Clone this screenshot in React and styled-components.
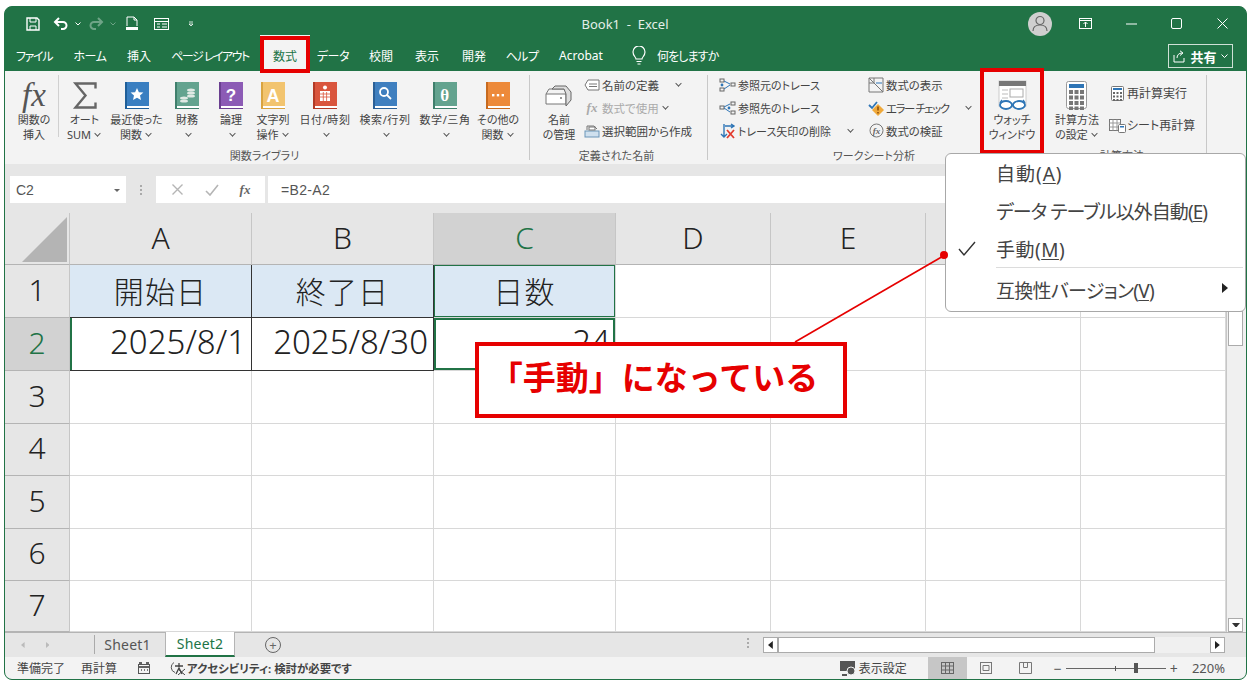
import React from "react";
import styled, { createGlobalStyle } from "styled-components";

const UI = `"Noto Sans", "Noto Sans CJK JP", sans-serif`;
const GREEN = "#217346";
const RED = "#e60000";

const Global = createGlobalStyle`
  html, body { margin: 0; padding: 0; background: #fff; }
  body { font-family: ${UI}; font-feature-settings: "palt"; }
  * { box-sizing: border-box; }
`;

const Page = styled.div`
  width: 1251px;
  height: 686px;
  padding: 6px 4px;
`;
const Window = styled.div`
  position: relative;
  width: 1243px;
  height: 674px;
  border: 1px solid ${GREEN};
  border-radius: 8px;
  overflow: hidden;
  display: flex;
  flex-direction: column;
  background: ${GREEN};
`;

/* ---------- title bar ---------- */
const TitleBar = styled.div`
  height: 33px;
  flex: none;
  display: flex;
  align-items: center;
  color: #fff;
`;
const Quick = styled.div`
  width: 420px;
  flex: none;
  display: flex;
  align-items: center;
  padding-left: 20px;
`;
const QuickSlot = styled.span`
  display: flex;
  align-items: center;
  justify-content: center;
  width: ${(p) => p.$w}px;
  height: 20px;
  margin-left: ${(p) => p.$ml ?? 0}px;
  opacity: ${(p) => (p.$dim ? 0.35 : 1)};
`;
const Title = styled.div`
  width: 400px;
  text-align: center;
  font-size: 13px;
  color: #e4efe9;
`;
const WinControls = styled.div`
  margin-left: auto;
  padding-right: 1px;
  display: flex;
  align-items: center;
`;
const Avatar = styled.span`
  width: 24px;
  height: 24px;
  border-radius: 50%;
  background: #cfcfcf;
  display: flex;
  align-items: center;
  justify-content: center;
  margin-right: 11px;
`;
const WinBtn = styled.span`
  width: 45.5px;
  display: flex;
  align-items: center;
  justify-content: center;
`;

/* ---------- tabs ---------- */
const TabBar = styled.div`
  height: 31px;
  flex: none;
  display: flex;
  align-items: stretch;
  position: relative;
  padding-left: 1px;
`;
const Tab = styled.div`
  width: ${(p) => p.$w}px;
  flex: none;
  display: flex;
  align-items: center;
  justify-content: center;
  font-size: 12px;
  letter-spacing: ${(p) => p.$ls ?? 0}px;
  white-space: nowrap;
  color: ${(p) => (p.$active ? GREEN : "#fff")};
  background: ${(p) => (p.$active ? "#f3f3f3" : "transparent")};
  margin-top: ${(p) => (p.$active ? "-5px" : 0)};
  padding-top: ${(p) => (p.$active ? "5px" : 0)};
`;
const Tell = styled.div`
  display: flex;
  align-items: center;
  gap: 11px;
  font-size: 12px;
  letter-spacing: -0.9px;
  color: #fff;
  margin-left: 14px;
`;
const Share = styled.div`
  position: absolute;
  left: 1163px;
  top: 4px;
  width: 65px;
  height: 24px;
  border: 1px solid #cfe0d6;
  display: flex;
  align-items: center;
  justify-content: center;
  gap: 4px;
  color: #fff;
  font-size: 13px;
  font-weight: 700;
`;

/* ---------- ribbon ---------- */
const Ribbon = styled.div`
  height: 93px;
  flex: none;
  background: #f3f3f3;
  display: flex;
  padding-left: 5px;
  color: #444;
`;
const Group = styled.div`
  width: ${(p) => p.$w}px;
  flex: none;
  display: flex;
  flex-direction: column;
  border-right: 1px solid #c8c8c8;
  margin: 4px 0;
  height: 85px;
`;
const GroupBody = styled.div`
  height: 74px;
  display: flex;
  flex: none;
`;
const LabelRow = styled.div`
  display: flex;
`;
const GroupLabel = styled.div`
  font-size: 11px;
  line-height: 14px;
  text-align: center;
  color: #555;
  white-space: nowrap;
  width: ${(p) => (p.$w ? `${p.$w}px` : "auto")};
  margin-left: ${(p) => p.$ml ?? 0}px;
  padding-right: ${(p) => p.$pr ?? 0}px;
`;
const BigBtn = styled.div`
  width: ${(p) => p.$w}px;
  flex: none;
  display: flex;
  flex-direction: column;
  align-items: center;
  padding-top: 4px;
  font-size: 11px;
  line-height: 15px;
  letter-spacing: ${(p) => p.$ls ?? 0}px;
  white-space: nowrap;
  text-align: center;
  border-right: ${(p) => (p.$line ? "1px solid #d0d0d0" : "none")};
  height: ${(p) => (p.$line ? "62px" : "auto")};
`;
const BigIcon = styled.div`
  height: 33px;
  flex: none;
  display: flex;
  align-items: center;
  justify-content: center;
`;
const Chev = styled.span`
  display: inline-block;
  width: 5px;
  height: 5px;
  border-right: 1px solid #555;
  border-bottom: 1px solid #555;
  transform: rotate(45deg) scale(0.9);
  margin: 0 2px 3px ${(p) => p.$gap ?? 4}px;
`;
const SmallCol = styled.div`
  width: ${(p) => p.$w}px;
  flex: none;
  display: flex;
  flex-direction: column;
  justify-content: ${(p) => (p.$spread ? "center" : "flex-start")};
  gap: ${(p) => (p.$spread ? "9px" : "0")};
  height: ${(p) => (p.$spread ? "66px" : "auto")};
  font-size: ${(p) => p.$fs ?? 11}px;
  margin-left: ${(p) => p.$ml ?? 0}px;
  margin-top: ${(p) => p.$mt ?? -2}px;
  padding-left: ${(p) => p.$pl ?? 0}px;
`;
const SmallRow = styled.div`
  height: 23px;
  display: flex;
  align-items: center;
  white-space: nowrap;
  letter-spacing: ${(p) => p.$ls ?? 0}px;
  color: ${(p) => (p.$dim ? "#aaa" : "#444")};
`;
const SmallIcon = styled.span`
  width: ${(p) => p.$w ?? 20}px;
  flex: none;
  display: flex;
  align-items: center;
  justify-content: center;
  margin-right: ${(p) => p.$mr ?? 0}px;
`;
const FxBig = styled.span`
  font-family: "Liberation Serif", serif;
  font-style: italic;
  font-size: 33px;
  color: #555;
  line-height: 33px;
`;
const FxSmall = styled.span`
  font-family: "Liberation Serif", serif;
  font-style: italic;
  font-weight: 700;
  font-size: ${(p) => p.$s ?? 13}px;
  color: ${(p) => p.$c ?? "#777"};
`;

/* ---------- formula bar ---------- */
const FormulaBar = styled.div`
  height: 49px;
  flex: none;
  background: #e6e6e6;
  display: flex;
  padding: 12px 0 10px 5px;
`;
const NameBox = styled.div`
  width: 116px;
  background: #fff;
  display: flex;
  align-items: center;
  justify-content: space-between;
  padding: 1px 6px 0;
  font-family: "Liberation Sans", sans-serif;
  font-size: 14px;
  color: #555;
`;
const Caret = styled.span`
  width: 0;
  height: 0;
  border-left: 3px solid transparent;
  border-right: 3px solid transparent;
  border-top: 3px solid #666;
`;
const Grip = styled.span`
  width: 30px;
  display: flex;
  flex-direction: column;
  align-items: center;
  justify-content: center;
  gap: 2px;
  i {
    width: 2px;
    height: 2px;
    background: #aaa;
    display: block;
  }
`;
const FxBox = styled.div`
  width: 109px;
  background: #fff;
  display: flex;
  align-items: center;
  justify-content: space-around;
  padding: 0 4px;
  margin-right: 3px;
`;
const Input = styled.div`
  flex: 1;
  background: #fff;
  display: flex;
  align-items: center;
  padding-left: 13px;
  font-family: "Liberation Sans", sans-serif;
  font-size: 14px;
  letter-spacing: 0.35px;
  color: #555;
`;

/* ---------- sheet grid ---------- */
const SheetArea = styled.div`
  height: 419px;
  flex: none;
  display: flex;
  background: #fff;
`;
const Grid = styled.div`
  display: grid;
  grid-template-columns: 65px 182px 182px 182px 155px 155px 155px 145px;
  grid-template-rows: 52px 53px 53px 53px 52px 53px 52px 51px;
  width: 1221px;
`;
const Corner = styled.div`
  background: #e6e6e6;
  border-right: 1px solid #c6c6c6;
  border-bottom: 1px solid #b4b4b4;
  display: flex;
  align-items: flex-end;
  justify-content: flex-end;
  padding: 0 2px 2px 0;
`;
const ColHead = styled.div`
  background: ${(p) => (p.$sel ? "#d2d2d2" : "#e6e6e6")};
  color: ${(p) => (p.$sel ? GREEN : "#222")};
  border-right: 1px solid #c6c6c6;
  border-bottom: 1px solid #b4b4b4;
  display: flex;
  align-items: center;
  justify-content: center;
  padding-bottom: 2px;
  font-size: 30px;
  font-weight: 300;
`;
const RowHead = styled(ColHead)`
  padding-bottom: 4px;
`;
const Cell = styled.div`
  display: flex;
  align-items: center;
  justify-content: ${(p) => p.$align ?? "center"};
  padding: 0 ${(p) => (p.$align ? "5px" : "0")} ${(p) => (p.$align ? "5px" : "3px")} 0;
  font-size: ${(p) => (p.$cjk ? "30px" : "33px")};
  letter-spacing: ${(p) => (p.$cjk ? "1.2px" : "0")};
  font-weight: 300;
  color: #222;
  white-space: nowrap;
  overflow: hidden;
  background: ${(p) => (p.$fill ? "#dbe8f4" : "#fff")};
  border-right: 1px solid ${(p) => (p.$dark ? "#333" : "#d8d8d8")};
  border-bottom: 1px solid ${(p) => (p.$dark ? "#333" : "#d8d8d8")};
  ${(p) => p.$box && `box-shadow: inset 0 0 0 ${p.$box}px ${GREEN};`}
  ${(p) => p.$leftGreen && `box-shadow: inset 2px 0 0 ${GREEN};`}
`;
const VScroll = styled.div`
  width: 20px;
  flex: none;
  background: #f0f0f0;
  border-left: 1px solid #c6c6c6;
  display: flex;
  flex-direction: column;
  padding-left: 1px;
  padding-right: 3px;
`;
const VThumb = styled.div`
  height: 35px;
  margin-top: 98px;
  background: #fff;
  border: 1px solid #ababab;
`;
const ScrollBtn = styled.div`
  width: ${(p) => p.$w ?? 15}px;
  height: ${(p) => p.$h ?? 14}px;
  flex: none;
  background: #fff;
  border: 1px solid #ababab;
  display: flex;
  align-items: center;
  justify-content: center;
  margin-top: ${(p) => (p.$auto ? "auto" : 0)};
`;

/* ---------- sheet tabs ---------- */
const SheetBar = styled.div`
  height: 25px;
  flex: none;
  background: #e6e6e6;
  border-top: 1px solid #b4b4b4;
  display: flex;
  align-items: stretch;
  font-size: 14px;
  letter-spacing: 0.2px;
  color: #555;
`;
const NavArrows = styled.div`
  width: 85px;
  flex: none;
  display: flex;
  align-items: center;
  justify-content: center;
  gap: 21px;
  padding-right: 25px;
  position: relative;
  &::after {
    content: "";
    position: absolute;
    right: -5px;
    top: 2px;
    bottom: 3px;
    width: 1px;
    background: #aaa;
  }
`;
const SheetTab = styled.div`
  width: ${(p) => p.$w}px;
  flex: none;
  display: flex;
  align-items: center;
  justify-content: center;
  margin-top: -1px;
  background: ${(p) => (p.$active ? "#fff" : "transparent")};
  color: ${(p) => (p.$active ? GREEN : "#555")};
  border-bottom: ${(p) => (p.$active ? `2px solid ${GREEN}` : "none")};
  border-left: ${(p) => (p.$active ? "1px solid #b4b4b4" : "none")};
  border-right: ${(p) => (p.$active ? "1px solid #b4b4b4" : "none")};
  height: 25px;
`;
const AddSheet = styled.span`
  width: 16px;
  height: 16px;
  margin: 4px 0 0 30px;
  border: 1px solid #666;
  border-radius: 50%;
  display: flex;
  align-items: center;
  justify-content: center;
  font-size: 13px;
  line-height: 1;
  color: #666;
`;
const HScroll = styled.div`
  margin-left: auto;
  margin-right: 21px;
  display: flex;
  align-items: center;
  width: 462px;
  height: 16px;
  align-self: center;
  position: relative;
`;
const HThumb = styled.div`
  flex: none;
  width: 377px;
  height: 16px;
  background: #fff;
  border: 1px solid #ababab;
`;
const HTrack = styled.div`
  flex: 1;
  height: 16px;
  background: #f0f0f0;
`;
const HGrip = styled(Grip)`
  position: absolute;
  left: -30px;
  top: 1px;
`;

/* ---------- status ---------- */
const StatusBar = styled.div`
  height: 22px;
  flex: none;
  background: #f3f3f3;
  display: flex;
  align-items: center;
  color: #444;
  padding-left: 12px;
`;
const StatusText = styled.span`
  margin-right: ${(p) => p.$mr ?? 16}px;
  font-weight: ${(p) => (p.$bold ? 700 : 400)};
  font-size: ${(p) => (p.$bold ? "11.4px" : "12px")};
  white-space: nowrap;
`;
const StatusGlyph = styled.svg`
  flex: none;
  margin-right: ${(p) => p.$mr ?? 0}px;
`;
const StatusRight = styled.div`
  margin-left: auto;
  height: 100%;
  display: flex;
  align-items: center;
`;
const ViewBtn = styled.span`
  width: 39px;
  height: 100%;
  display: flex;
  align-items: center;
  justify-content: center;
  background: ${(p) => (p.$on ? "#c6c6c6" : "transparent")};
`;
const Zoomer = styled.div`
  display: flex;
  align-items: center;
  margin-left: 9px;
  gap: 4px;
  color: #555;
  font-size: 14px;
`;
const Slider = styled.div`
  position: relative;
  width: 100px;
  flex: none;
  height: 1px;
  background: #666;
`;
const SliderMark = styled.span`
  position: absolute;
  left: ${(p) => p.$x}px;
  top: ${(p) => -(p.$h - 1) / 2}px;
  width: ${(p) => p.$wd}px;
  height: ${(p) => p.$h}px;
  background: #555;
`;
const ZoomPct = styled.span`
  margin: 0 21px 0 14px;
  font-size: 13px;
  color: #555;
`;

/* ---------- overlays ---------- */
const RedFrame = styled.div`
  position: absolute;
  left: ${(p) => p.$x}px;
  top: ${(p) => p.$y}px;
  width: ${(p) => p.$w}px;
  height: ${(p) => p.$h}px;
  border: 4px solid ${RED};
  z-index: 3;
`;
const Menu = styled.div`
  position: absolute;
  left: 940px;
  top: 146px;
  width: 301px;
  height: 159px;
  background: #fff;
  border: 1px solid #a8a8a8;
  border-radius: 6px;
  z-index: 4;
  font-size: 19px;
  color: #444;
`;
const MenuItem = styled.div`
  height: ${(p) => p.$h ?? 38}px;
  display: flex;
  align-items: center;
  padding-left: 50px;
  white-space: nowrap;
  position: relative;
  letter-spacing: ${(p) => p.$ls ?? 0}px;
  u {
    text-underline-offset: 2px;
  }
`;
const MenuSep = styled.div`
  height: 1px;
  background: #dcdcdc;
  margin: 0 2px 0 50px;
`;
const Check = styled.span`
  position: absolute;
  left: 12px;
  top: 11px;
  display: flex;
`;
const SubArrow = styled.span`
  position: absolute;
  right: 17px;
  top: 15px;
  width: 0;
  height: 0;
  border-top: 5px solid transparent;
  border-bottom: 5px solid transparent;
  border-left: 6px solid #222;
`;
const Leader = styled.svg`
  position: absolute;
  left: 780px;
  top: 235px;
  z-index: 5;
`;
const Callout = styled.div`
  position: absolute;
  left: 470px;
  top: 335px;
  width: 372px;
  height: 76px;
  background: #fff;
  border: 4px solid ${RED};
  z-index: 3;
  display: flex;
  align-items: center;
  justify-content: center;
  color: ${RED};
  font-size: 33px;
  font-weight: 700;
  font-family: "Noto Sans CJK JP", sans-serif;
  font-feature-settings: normal;
  padding: 0 14px 8px 0;
  white-space: nowrap;
`;

/* ---------- drawings ---------- */
const Svg = ({ w, h, children, ...r }) => (
  <svg width={w} height={h} viewBox={`0 0 ${w} ${h}`} fill="none" {...r}>
    {children}
  </svg>
);

const Book = ({ color, glyph, dark, star }) => (
  <Svg w={26} h={29}>
    <rect x="1" y="1" width="24" height="25" fill={color} />
    <rect x="1" y="1" width="2" height="27" fill={dark} />
    <rect x="3" y="25" width="22" height="2" fill="#fff" />
    <rect x="3" y="27" width="22" height="1" fill={dark} />
    {star ? (
      <path d="M13 7l1.9 4.2 4.5.4-3.4 3 1 4.5-4-2.4-4 2.4 1-4.5-3.4-3 4.5-.4z" fill="#fff" />
    ) : (
      glyph
    )}
  </Svg>
);
const G = styled.text`
  font-family: ${(p) => p.$f ?? '"Liberation Sans", sans-serif'};
  font-weight: 700;
`;

const bookDefs = {
  coin: (
    <g fill="#dfe9e4">
      <ellipse cx="10" cy="17" rx="4" ry="1.6" />
      <ellipse cx="10" cy="20" rx="4" ry="1.6" />
      <ellipse cx="17" cy="9" rx="4" ry="1.6" />
      <ellipse cx="17" cy="12" rx="4" ry="1.6" />
      <ellipse cx="17" cy="15" rx="4" ry="1.6" />
    </g>
  ),
  q: <G x="13" y="20" textAnchor="middle" fontSize="17" fill="#fff">?</G>,
  a: <G x="13" y="21" textAnchor="middle" fontSize="18" fill="#fff">A</G>,
  cal: (
    <g>
      <circle cx="13" cy="6.5" r="2" fill="#fff" />
      <rect x="8" y="10" width="10" height="10" fill="#fff" />
      <path d="M8 13h10M8 16h10M11.3 11v9M14.6 11v9" stroke="#d9553d" strokeWidth=".8" />
    </g>
  ),
  lens: (
    <g stroke="#fff" strokeWidth="1.8">
      <circle cx="12" cy="11" r="4" />
      <path d="M15 14l4 4" />
    </g>
  ),
  theta: <G x="13" y="20" $f='"Liberation Serif", serif' textAnchor="middle" fontSize="17" fill="#fff">θ</G>,
  more: (
    <g fill="#fff">
      <rect x="7" y="13" width="2.4" height="2.4" />
      <rect x="11.8" y="13" width="2.4" height="2.4" />
      <rect x="16.6" y="13" width="2.4" height="2.4" />
    </g>
  ),
};

const SigmaIcon = () => (
  <Svg w={26} h={29}>
    <path d="M23.5 7.5V2.5H3.5L13.5 14.5L3.5 26.5H23.5V21.5" stroke="#666" strokeWidth="2.4" />
  </Svg>
);
const NameMgr = () => (
  <Svg w={30} h={24}>
    <path d="M2 10l3-5h16l2 5" stroke="#777" />
    <path d="M2 10h20v10H2z" fill="#fff" stroke="#777" />
    <path d="M8 5l3-3h11l5 6v8l-5 6V10l-2-5z" fill="#ddd" stroke="#666" />
    <circle cx="17" cy="14" r="1" fill="#777" />
  </Svg>
);
const TagIcon = () => (
  <Svg w={16} h={12}>
    <path d="M4 1h11v10H4L1 6z" stroke="#777" fill="#fff" />
    <path d="M5 5h8M5 7.5h8" stroke="#777" />
  </Svg>
);
const SelectIcon = () => (
  <Svg w={16} h={14}>
    <path d="M3 6V2h7l3 3" stroke="#777" />
    <rect x="1" y="7" width="14" height="6" fill="#cfe0ee" stroke="#6a95b8" />
    <rect x="5" y="3" width="6" height="3" fill="#fff" stroke="#777" />
  </Svg>
);
const TraceA = () => (
  <Svg w={17} h={14}>
    <rect x="1" y="1" width="4" height="3" stroke="#666" />
    <rect x="1" y="10" width="4" height="3" stroke="#666" />
    <rect x="12" y="5" width="4" height="3" stroke="#666" />
    <path d="M5 3l6 3M5 11l6-4" stroke="#2e75b6" />
    <circle cx="3" cy="7" r="1.4" fill="#2e75b6" />
  </Svg>
);
const TraceB = () => (
  <Svg w={17} h={14}>
    <rect x="1" y="5" width="4" height="3" stroke="#666" />
    <rect x="12" y="1" width="4" height="3" stroke="#666" />
    <rect x="12" y="10" width="4" height="3" stroke="#666" />
    <path d="M5 6l6-3M5 7l6 4" stroke="#2e75b6" />
    <circle cx="10" cy="7" r="1.4" fill="#2e75b6" />
  </Svg>
);
const TraceX = () => (
  <Svg w={17} h={16}>
    <path d="M5 1v13M2 11l3 3 3-3" stroke="#2e75b6" strokeWidth="1.4" />
    <path d="M6 3h9M12 1l3 2-3 2" stroke="#2e75b6" strokeWidth="1.4" />
    <path d="M8 7l7 8M15 7l-7 8" stroke="#e23b2e" strokeWidth="1.8" />
  </Svg>
);
const ShowF = () => (
  <Svg w={16} h={16}>
    <path d="M1 1h14v14H1z" stroke="#777" />
    <path d="M1 1l14 14M6 1v5M1 6h5" stroke="#777" />
    <path d="M8 6h6" stroke="#2e75b6" />
  </Svg>
);
const ErrCheck = () => (
  <Svg w={17} h={16}>
    <path d="M1 5l3 3 5-6" stroke="#2e75b6" strokeWidth="1.8" />
    <path d="M10 4l6 6-6 6-6-6z" fill="#f0a93a" />
    <path d="M10 6.5v4M10 12v1.4" stroke="#7a3c00" strokeWidth="1.3" />
  </Svg>
);
const Evaluate = () => (
  <Svg w={15} h={15}>
    <circle cx="7.5" cy="7.5" r="6.5" stroke="#777" />
    <G x="7.5" y="11" textAnchor="middle" fontSize="9" $f='"Liberation Serif", serif' fontStyle="italic" fill="#666">fx</G>
  </Svg>
);
const Watch = () => (
  <Svg w={30} h={32}>
    <rect x="2" y="1" width="27" height="25" fill="#fff" stroke="#ccc" />
    <rect x="2" y="1" width="27" height="5" fill="#777" />
    <path d="M5 10h6M5 14h6M5 18h6" stroke="#bbb" />
    <rect x="13" y="9" width="13" height="8" fill="#fff" stroke="#aaa" />
    <ellipse cx="9" cy="25" rx="6" ry="4" fill="#fff" stroke="#2e75b6" strokeWidth="1.8" />
    <ellipse cx="22" cy="25" rx="6" ry="4" fill="#fff" stroke="#2e75b6" strokeWidth="1.8" />
    <path d="M15 25h1M3 23l2-3M28 23l-2-3" stroke="#2e75b6" strokeWidth="1.4" />
  </Svg>
);
const Keys = ({ x, y, n, s, g, c }) => {
  const out = [];
  for (let j = 0; j < n[1]; j++)
    for (let i = 0; i < n[0]; i++)
      out.push(<rect key={`${i}-${j}`} x={x + i * (s + g)} y={y + j * (s + g)} width={s} height={s} fill={c} />);
  return <g>{out}</g>;
};
const Calc = () => (
  <Svg w={22} h={29}>
    <rect x=".5" y=".5" width="20" height="27" rx="2" fill="#fff" stroke="#999" />
    <rect x="3" y="3" width="15" height="4" fill="#2e75b6" />
    <Keys x={3} y={9} n={[3, 4]} s={4} g={1.5} c="#777" />
  </Svg>
);
const SmallCalc = () => (
  <Svg w={13} h={15}>
    <rect x=".5" y=".5" width="12" height="14" rx="1" fill="#fff" stroke="#777" />
    <rect x="2" y="2" width="9" height="2" fill="#2e75b6" />
    <Keys x={2} y={6} n={[3, 3]} s={2} g={1.5} c="#666" />
  </Svg>
);
const SheetCalc = () => (
  <Svg w={17} h={15}>
    <rect x=".5" y="1.5" width="11" height="11" fill="#fff" stroke="#777" />
    <path d="M.5 5h11M.5 9h11M4 1.5v11M8 1.5v11" stroke="#999" />
    <rect x="9.5" y="6.5" width="7" height="8" rx="1" fill="#fff" stroke="#777" />
    <rect x="11" y="8" width="4" height="1.5" fill="#2e75b6" />
  </Svg>
);
const Tri = ({ dir = "right", c = "#333", s = 3 }) => {
  const p = {
    right: `0,0 ${s * 1.2},${s} 0,${s * 2}`,
    left: `${s * 1.2},0 0,${s} ${s * 1.2},${s * 2}`,
    down: `0,0 ${s * 2},0 ${s},${s * 1.2}`,
  }[dir];
  return (
    <svg width={dir === "down" ? s * 2 : s * 1.2} height={dir === "down" ? s * 1.2 : s * 2}>
      <polygon points={p} fill={c} />
    </svg>
  );
};

const books = [
  { w: 53, t: ["最近使った", "関数"], color: "#3a7fc1", dark: "#1f5f99", star: true },
  { w: 48, t: ["財務", ""], color: "#63a38f", dark: "#3f7f6c", glyph: bookDefs.coin },
  { w: 40, t: ["論理", ""], color: "#8c5bb5", dark: "#6a3f90", glyph: bookDefs.q },
  { w: 44, t: ["文字列", "操作"], color: "#f2c46f", dark: "#d9a441", glyph: bookDefs.a },
  { w: 60, t: ["日付/時刻", ""], color: "#d9553d", dark: "#b23a26", glyph: bookDefs.cal, ls: 0.6 },
  { w: 60, t: ["検索/行列", ""], color: "#3f7fbf", dark: "#2a5f96", glyph: bookDefs.lens, ls: 0.6 },
  { w: 60, t: ["数学/三角", ""], color: "#63a38f", dark: "#3f7f6c", glyph: bookDefs.theta, ls: 0.6 },
  { w: 46, t: ["その他の", "関数"], color: "#ed8a3a", dark: "#c76a1f", glyph: bookDefs.more },
];

const tabs = [
  ["ファイル", 56, -1.3], ["ホーム", 56, -0.5], ["挿入", 42], ["ページ レイアウト", 100, -1.5],
  ["数式", 50], ["データ", 46, -0.5], ["校閲", 50], ["表示", 42], ["開発", 52], ["ヘルプ", 44, -0.5], ["Acrobat", 74],
];
const colW = ["A", "B", "C", "D", "E", "F", ""];

export default function App() {
  const rows = [3, 4, 5, 6, 7];
  return (
    <Page>
      <Global />
      <Window>
        <TitleBar>
          <Quick>
            <QuickSlot $w={16}>
              <Svg w={14} h={14}>
                <path d="M1 1h10l2 2v10H1z" stroke="#fff" strokeWidth="1.4" />
                <path d="M4 1v4h6V1M4 13V9h6v4" stroke="#fff" />
              </Svg>
            </QuickSlot>
            <QuickSlot $w={27} $ml={6}>
              <Svg w={16} h={14}>
                <path d="M6 1L2 5l4 4M2 5h8a3.5 3.5 0 0 1 0 7H8" stroke="#fff" strokeWidth="2" />
              </Svg>
            </QuickSlot>
            <QuickSlot $w={8}>
              <Svg w={6} h={4}><path d="M.5.5L3 3 5.5.5" stroke="#fff" /></Svg>
            </QuickSlot>
            <QuickSlot $w={27} $dim>
              <Svg w={16} h={14}>
                <path d="M10 1l4 4-4 4M14 5H6a3.5 3.5 0 0 0 0 7h2" stroke="#fff" strokeWidth="2" />
              </Svg>
            </QuickSlot>
            <QuickSlot $w={8} $dim>
              <Svg w={6} h={4}><path d="M.5.5L3 3 5.5.5" stroke="#fff" /></Svg>
            </QuickSlot>
            <QuickSlot $w={30}>
              <Svg w={14} h={15}>
                <path d="M2 10V1h7l3 3v6M9 1v3h3" stroke="#fff" />
                <rect x="1" y="11" width="12" height="3" fill="#fff" />
              </Svg>
            </QuickSlot>
            <QuickSlot $w={28}>
              <Svg w={15} h={12}>
                <rect x=".5" y=".5" width="14" height="11" stroke="#fff" />
                <path d="M.5 3.5h14M3 6h3M8 6h5M8 9h5M3 9h3" stroke="#fff" />
              </Svg>
            </QuickSlot>
            <QuickSlot $w={20} $ml={6}>
              <Svg w={6} h={6}><path d="M1 1h4M1 3l2 2 2-2z" stroke="#fff" strokeWidth=".8" /></Svg>
            </QuickSlot>
          </Quick>
          <Title>Book1&nbsp; -&nbsp; Excel</Title>
          <WinControls>
            <Avatar>
              <Svg w={16} h={17}>
                <circle cx="8" cy="5.5" r="4" stroke="#666" strokeWidth="1.2" />
                <path d="M1 16c0-4 3-6 7-6s7 2 7 6" stroke="#666" strokeWidth="1.2" />
              </Svg>
            </Avatar>
            <WinBtn>
              <Svg w={13} h={11}>
                <rect x=".5" y=".5" width="12" height="10" stroke="#fff" />
                <path d="M.5 2.5h12M6.5 9V4M4.5 6l2-2 2 2" stroke="#fff" />
              </Svg>
            </WinBtn>
            <WinBtn><Svg w={11} h={2}><path d="M0 1h11" stroke="#fff" /></Svg></WinBtn>
            <WinBtn><Svg w={11} h={11}><rect x=".5" y=".5" width="10" height="10" rx="1.5" stroke="#fff" /></Svg></WinBtn>
            <WinBtn><Svg w={11} h={11}><path d="M.5.5l10 10M10.5.5l-10 10" stroke="#fff" /></Svg></WinBtn>
          </WinControls>
        </TitleBar>

        <TabBar>
          {tabs.map(([t, w, ls]) => (
            <Tab key={t} $w={w} $ls={ls} $active={t === "数式"}>{t}</Tab>
          ))}
          <Tell>
            <Svg w={14} h={19}>
              <path d="M4 13c0-2-3-3-3-7a6 6 0 0 1 12 0c0 4-3 5-3 7z" stroke="#fff" strokeWidth="1.2" />
              <path d="M4.5 15.5h5M5.5 18h3" stroke="#fff" strokeWidth="1.2" />
            </Svg>
            <span>何をしますか</span>
          </Tell>
          <Share>
            <Svg w={13} h={13}>
              <path d="M1 5v7h10V8M4 8c0-3 2-5 5-5M7 .8L10 3 7 5.5" stroke="#fff" />
            </Svg>
            <span>共有</span>
            <Svg w={7} h={5}><path d="M.5.5L3.5 3.5 6.5.5" stroke="#fff" /></Svg>
          </Share>
        </TabBar>

        <Ribbon>
          <Group $w={520}>
            <GroupBody>
              <BigBtn $w={49} $line>
                <BigIcon><FxBig>fx</FxBig></BigIcon>
                <span>関数の</span>
                <span>挿入</span>
              </BigBtn>
              <BigBtn $w={51}>
                <BigIcon><SigmaIcon /></BigIcon>
                <span>オート</span>
                <span>SUM<Chev /></span>
              </BigBtn>
              {books.map((b) => (
                <BigBtn key={b.t[0]} $w={b.w} $ls={b.ls}>
                  <BigIcon>
                    <Book color={b.color} dark={b.dark} star={b.star} glyph={b.glyph} />
                  </BigIcon>
                  <span>{b.t[0]}</span>
                  <span>{b.t[1]}<Chev /></span>
                </BigBtn>
              ))}
            </GroupBody>
            <GroupLabel $pr={10}>関数ライブラリ</GroupLabel>
          </Group>

          <Group $w={178}>
            <GroupBody>
              <BigBtn $w={58}>
                <BigIcon><NameMgr /></BigIcon>
                <span>名前</span>
                <span>の管理</span>
              </BigBtn>
              <SmallCol $w={120} $ml={-6} $fs={11.5}>
                <SmallRow>
                  <SmallIcon><TagIcon /></SmallIcon>
                  名前の定義<Chev $gap={17} />
                </SmallRow>
                <SmallRow $dim>
                  <SmallIcon><FxSmall $c="#aaa">fx</FxSmall></SmallIcon>
                  数式で使用<Chev $gap={4} />
                </SmallRow>
                <SmallRow>
                  <SmallIcon><SelectIcon /></SmallIcon>
                  選択範囲から作成
                </SmallRow>
              </SmallCol>
            </GroupBody>
            <GroupLabel $pr={4}>定義された名前</GroupLabel>
          </Group>

          <Group $w={499}>
            <GroupBody>
              <SmallCol $w={158} $pl={9}>
                <SmallRow>
                  <SmallIcon $mr={1}><TraceA /></SmallIcon>参照元のトレース
                </SmallRow>
                <SmallRow>
                  <SmallIcon $mr={1}><TraceB /></SmallIcon>参照先のトレース
                </SmallRow>
                <SmallRow>
                  <SmallIcon $mr={1}><TraceX /></SmallIcon>トレース矢印の削除<Chev $gap={17} />
                </SmallRow>
              </SmallCol>
              <SmallCol $w={115} $fs={11.4}>
                <SmallRow>
                  <SmallIcon><ShowF /></SmallIcon>数式の表示
                </SmallRow>
                <SmallRow $ls={-1.4}>
                  <SmallIcon><ErrCheck /></SmallIcon>エラー チェック<Chev $gap={17} />
                </SmallRow>
                <SmallRow>
                  <SmallIcon><Evaluate /></SmallIcon>数式の検証
                </SmallRow>
              </SmallCol>
              <BigBtn $w={62}>
                <BigIcon><Watch /></BigIcon>
                <span>ウォッチ</span>
                <span>ウィンドウ</span>
              </BigBtn>
              <BigBtn $w={68}>
                <BigIcon><Calc /></BigIcon>
                <span>計算方法</span>
                <span>の設定<Chev /></span>
              </BigBtn>
              <SmallCol $w={95} $spread $ml={-3} $mt={1} $fs={12}>
                <SmallRow>
                  <SmallIcon $w={18} $mr={1}><SmallCalc /></SmallIcon>再計算実行
                </SmallRow>
                <SmallRow>
                  <SmallIcon $w={18} $mr={1}><SheetCalc /></SmallIcon>シート再計算
                </SmallRow>
              </SmallCol>
            </GroupBody>
            <LabelRow>
              <GroupLabel $w={332}>ワークシート分析</GroupLabel>
              <GroupLabel $ml={60}>計算方法</GroupLabel>
            </LabelRow>
          </Group>
        </Ribbon>

        <FormulaBar>
          <NameBox>C2<Caret /></NameBox>
          <Grip><i /><i /><i /></Grip>
          <FxBox>
            <Svg w={13} h={13}><path d="M1.5 1.5l10 10M11.5 1.5l-10 10" stroke="#b5b5b5" strokeWidth="1.4" /></Svg>
            <Svg w={14} h={12}><path d="M1 7l4 4 8-10" stroke="#b5b5b5" strokeWidth="1.6" /></Svg>
            <FxSmall $c="#666">fx</FxSmall>
          </FxBox>
          <Input>=B2-A2</Input>
        </FormulaBar>

        <SheetArea>
          <Grid>
            <Corner>
              <Svg w={45} h={45}><path d="M45 0v45H0z" fill="#b4b4b4" /></Svg>
            </Corner>
            {colW.map((c, i) => (
              <ColHead key={i} $sel={c === "C"}>{c}</ColHead>
            ))}
            <RowHead>1</RowHead>
            <Cell $fill $cjk $dark>開始日</Cell>
            <Cell $fill $cjk $dark>終了日</Cell>
            <Cell $fill $cjk $box={1}>日数</Cell>
            <Cell /><Cell /><Cell /><Cell />
            <RowHead $sel>2</RowHead>
            <Cell $dark $leftGreen $align="flex-end">2025/8/1</Cell>
            <Cell $dark $align="flex-end">2025/8/30</Cell>
            <Cell $box={2} $align="flex-end">24</Cell>
            <Cell /><Cell /><Cell /><Cell />
            {rows.map((r) => (
              <React.Fragment key={r}>
                <RowHead>{r}</RowHead>
                <Cell /><Cell /><Cell /><Cell /><Cell /><Cell /><Cell />
              </React.Fragment>
            ))}
          </Grid>
          <VScroll>
            <VThumb />
            <ScrollBtn $auto $w={15} $h={14}><Tri dir="down" s={4} /></ScrollBtn>
          </VScroll>
        </SheetArea>

        <SheetBar>
          <NavArrows>
            <Tri dir="left" c="#bbb" />
            <Tri dir="right" c="#bbb" />
          </NavArrows>
          <SheetTab $w={75}>Sheet1</SheetTab>
          <SheetTab $w={70} $active>Sheet2</SheetTab>
          <AddSheet>+</AddSheet>
          <HScroll>
            <HGrip><i /><i /><i /></HGrip>
            <ScrollBtn $h={16}><Tri dir="left" c="#222" s={4} /></ScrollBtn>
            <HThumb />
            <HTrack />
            <ScrollBtn $h={16}><Tri dir="right" c="#222" s={4} /></ScrollBtn>
          </HScroll>
        </SheetBar>

        <StatusBar>
          <StatusText>準備完了</StatusText>
          <StatusText $mr={21}>再計算</StatusText>
          <StatusGlyph as={Svg} w={12} h={12} $mr={20}>
            <rect x=".5" y="2.5" width="11" height="9" stroke="#555" />
            <path d="M1 1h3M8 1h3M1 5h10" stroke="#333" strokeWidth="1.6" />
            <path d="M3 8h1M6 8h1M9 8h1" stroke="#555" strokeWidth="1.4" />
          </StatusGlyph>
          <StatusGlyph as={Svg} w={16} h={14} $mr={1}>
            <path d="M4 1.5a5.5 5.5 0 0 0 1 10" stroke="#555" />
            <path d="M9 2v4M5 5h8M6 13l3-6 3 6" stroke="#444" strokeWidth="1.3" />
            <path d="M8 8l7 6M15 8l-7 6" stroke="#444" />
          </StatusGlyph>
          <StatusText $bold>アクセシビリティ: 検討が必要です</StatusText>
          <StatusRight>
            <StatusGlyph as={Svg} w={17} h={15} $mr={2}>
              <rect x="0" y="0" width="15" height="10" fill="#555" />
              <circle cx="11" cy="10" r="4" fill="#555" stroke="#f3f3f3" />
              <path d="M2 14h5" stroke="#555" strokeWidth="2" />
            </StatusGlyph>
            <StatusText $mr={21}>表示設定</StatusText>
            <ViewBtn $on>
              <Svg w={13} h={12}>
                <rect x=".5" y=".5" width="12" height="11" stroke="#666" />
                <path d="M.5 4h12M.5 8h12M4.5.5v11M8.5.5v11" stroke="#666" />
              </Svg>
            </ViewBtn>
            <ViewBtn>
              <Svg w={12} h={12}>
                <rect x=".5" y=".5" width="11" height="11" stroke="#777" />
                <path d="M3 3.5h6v5H3z" stroke="#777" />
              </Svg>
            </ViewBtn>
            <ViewBtn>
              <Svg w={13} h={12}>
                <path d="M.5.5h12v11H.5zM4.5.5v5h4v-5" stroke="#777" />
              </Svg>
            </ViewBtn>
            <Zoomer>
              <span>−</span>
              <Slider>
                <SliderMark $x={49} $wd={1} $h={5} />
                <SliderMark $x={68} $wd={4} $h={10} />
              </Slider>
              <span>+</span>
            </Zoomer>
            <ZoomPct>220%</ZoomPct>
          </StatusRight>
        </StatusBar>

        <RedFrame $x={255} $y={29} $w={50} $h={37} />
        <RedFrame $x={975} $y={61} $w={64} $h={86} />

        <Leader width={170} height={110}>
          <path d="M10 100L160 13" stroke={RED} strokeWidth="1.6" />
          <circle cx="159" cy="13" r="4" fill={RED} />
        </Leader>

        <Menu>
          <MenuItem $ls={1}><span>自動(<u>A</u>)</span></MenuItem>
          <MenuItem $ls={-0.95}><span>データ テーブル以外自動(<u>E</u>)</span></MenuItem>
          <MenuItem $h={37} $ls={0.5}>
            <Check>
              <Svg w={18} h={16}><path d="M1 8l5 6L17 1" stroke="#333" strokeWidth="1.4" /></Svg>
            </Check>
            <span>手動(<u>M</u>)</span>
          </MenuItem>
          <MenuSep />
          <MenuItem $h={43} $ls={-0.7}>
            <span>互換性バージョン(<u>V</u>)</span>
            <SubArrow />
          </MenuItem>
        </Menu>

        <Callout>「手動」になっている</Callout>
      </Window>
    </Page>
  );
}
